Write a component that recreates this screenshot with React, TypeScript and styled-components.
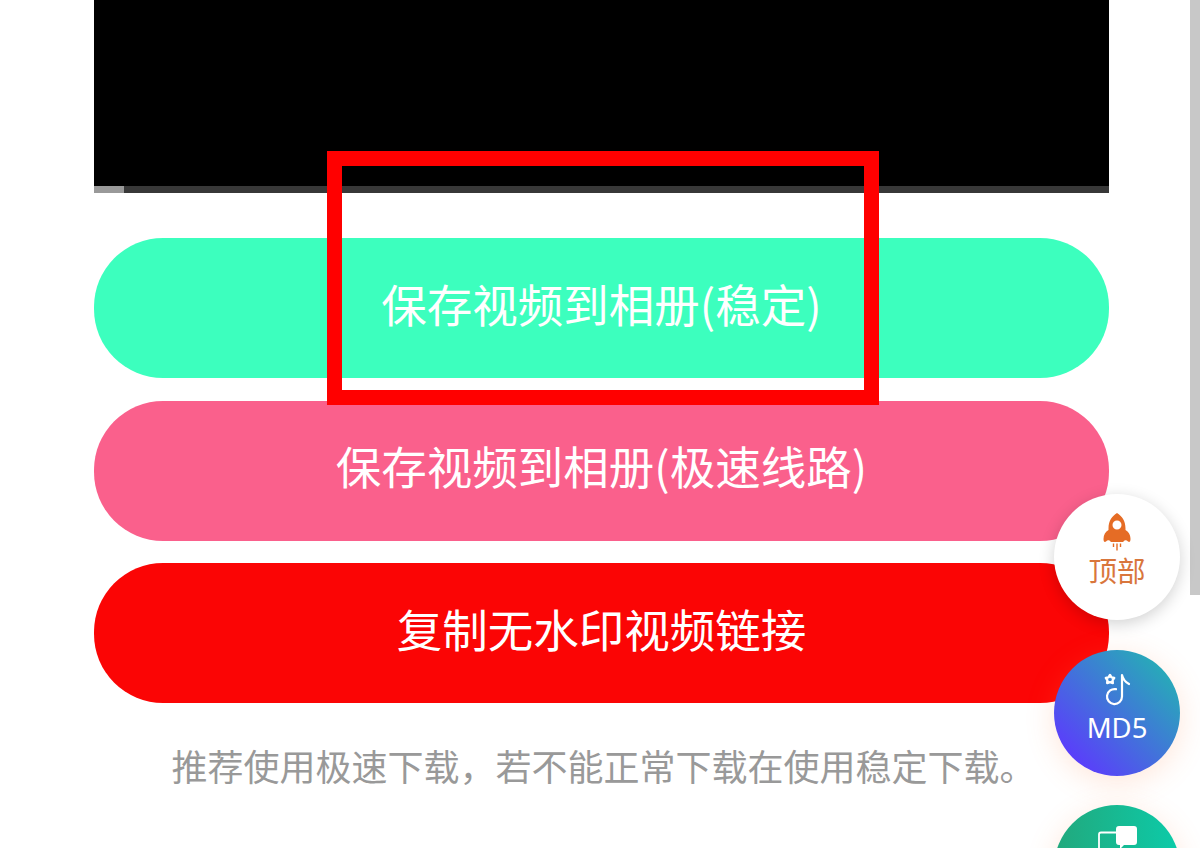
import React from 'react';
import styled, { createGlobalStyle } from 'styled-components';

const GlobalStyle = createGlobalStyle`
	html,
	body {
		margin: 0;
		padding: 0;
		background-color: #fff;
	}
`;

const Page = styled.div`
	position: relative;
	box-sizing: border-box;
	width: 1200px;
	height: 848px;
	overflow: hidden;
	padding: 0 91px 0 94px;
	background-color: #fff;
	font-family: 'Noto Sans CJK SC', 'Noto Sans', sans-serif;
`;

// 视频区域
const Video = styled.div`
	display: flex;
	align-items: flex-end;
	height: 193px;
	background-color: #000;
`;

const ProgressBar = styled.div`
	flex: 1;
	height: 7px;
	background-color: #383838;
`;

const ProgressFill = styled.div`
	width: 30px;
	height: 100%;
	background-color: #999;
`;

const Actions = styled.div`
	display: flex;
	flex-direction: column;
	gap: 22.5px;
	margin-top: 45px;
`;

const ActionButton = styled.button<{ $bg: string }>`
	height: 140px;
	padding: 0 0 9px;
	border: none;
	border-radius: 69px;
	background-color: ${(p) => p.$bg};
	color: #fff;
	font-family: inherit;
	font-size: 45.5px;
	font-weight: 400;
	line-height: 1;
`;

const Note = styled.p`
	margin: 20px 0 0;
	padding-left: 4px;
	color: #999;
	font-size: 36px;
	line-height: 84px;
	text-align: center;
	white-space: nowrap;
`;

// 标注红框
const Highlight = styled.div`
	position: absolute;
	left: 327px;
	top: 151px;
	box-sizing: border-box;
	width: 552px;
	height: 254px;
	border: 15px solid #ff0000;
`;

const Scrollbar = styled.div`
	position: absolute;
	top: 0;
	right: 0;
	width: 10px;
	height: 595px;
	background-color: #c8c8c8;
`;

// 右侧悬浮按钮
const FloatStack = styled.div`
	position: absolute;
	left: 1054px;
	top: 494px;
	display: flex;
	flex-direction: column;
	gap: 29.5px;
`;

const FloatButton = styled.div<{ $bg: string; $shadow: string; $color: string }>`
	display: flex;
	flex-direction: column;
	align-items: center;
	box-sizing: border-box;
	width: 126px;
	height: 126px;
	padding-top: 16px;
	border-radius: 50%;
	background: ${(p) => p.$bg};
	box-shadow: ${(p) => p.$shadow};
	color: ${(p) => p.$color};
`;

const FloatLabel = styled.span`
	margin-top: -2px;
	font-size: 28.5px;
	line-height: 34px;
`;

const LatinLabel = styled(FloatLabel)`
	margin-top: 0;
	font-family: 'Noto Sans', sans-serif;
	font-size: 27.5px;
`;

const Icon = styled.svg`
	display: block;
	flex: none;
	width: 45px;
	height: 45px;
`;

const RocketIcon = () => (
	<Icon viewBox="0 0 45 45">
		<path
			fill="#e56c25"
			fillRule="evenodd"
			d="M22 3C27 6 30.5 11 30.5 18.5V20C33.5 21.5 35.5 25 35.5 29C35.5 31.5 34.5 32.5 33 31.5C32 30.5 31 30 29.5 30.5L28 32H16L14.5 30.5C13 30 12 30.5 11 31.5C9.5 32.5 8.5 31.5 8.5 29C8.5 25 10.5 21.5 13.5 20V18.5C13.5 11 17 6 22 3ZM22 10.5A4.5 4.5 0 1 0 22 19.5A4.5 4.5 0 1 0 22 10.5Z"
		/>
		<path stroke="#e56c25" strokeWidth="1.4" d="M18.5 33.5V37M22 33.5V40.5M25.5 33.5V37" />
	</Icon>
);

const NoteIcon = () => (
	<Icon viewBox="0 0 45 45">
		<path
			fill="none"
			stroke="#fff"
			strokeWidth="2.2"
			strokeLinecap="round"
			d="M27 9V30.5A7.5 7.5 0 1 1 21 23.2M27 9C28 13 30 16 34 18"
		/>
		<path
			fill="none"
			stroke="#fff"
			strokeWidth="2.4"
			strokeLinejoin="round"
			d="M15 9L16.5 11.3L19.2 11.9L17.6 14.3L17.8 17L15 16.1L12.2 17L12.4 14.3L10.8 11.9L13.5 11.3Z"
		/>
	</Icon>
);

const ChatIcon = () => (
	<Icon viewBox="0 0 45 45">
		<path
			fill="none"
			stroke="#fff"
			strokeWidth="1.8"
			d="M21 11.5H6C4.5 11.5 4 12 4 13.5V45M38 27V45"
		/>
		<path
			fill="#fff"
			d="M24 5H39C41 5 42 6 42 8V21C42 23 41 24 39 24H29L25 28V24H24C22 24 21 23 21 21V8C21 6 22 5 24 5Z"
		/>
	</Icon>
);

const App = () => {
	return (
		<Page>
			<GlobalStyle />
			<Video>
				<ProgressBar>
					<ProgressFill />
				</ProgressBar>
			</Video>
			<Actions>
				<ActionButton $bg="#3cffbe">保存视频到相册(稳定)</ActionButton>
				<ActionButton $bg="#fa608c">保存视频到相册(极速线路)</ActionButton>
				<ActionButton $bg="#fb0505">复制无水印视频链接</ActionButton>
			</Actions>
			<Note>推荐使用极速下载，若不能正常下载在使用稳定下载。</Note>
			<Highlight />
			<Scrollbar />
			<FloatStack>
				<FloatButton $bg="#fff" $shadow="0 4px 16px rgba(0, 0, 0, 0.18)" $color="#d9763c">
					<RocketIcon />
					<FloatLabel>顶部</FloatLabel>
				</FloatButton>
				<FloatButton
					$bg="linear-gradient(45deg, #5a3ffa 15%, #25b0b5 90%)"
					$shadow="0 6px 30px rgba(255, 130, 70, 0.2)"
					$color="#fff"
				>
					<NoteIcon />
					<LatinLabel>MD5</LatinLabel>
				</FloatButton>
				<FloatButton
					$bg="linear-gradient(90deg, #22a87c, #0ccba9)"
					$shadow="0 6px 30px rgba(255, 130, 70, 0.2)"
					$color="#fff"
				>
					<ChatIcon />
				</FloatButton>
			</FloatStack>
		</Page>
	);
};

export default App;
